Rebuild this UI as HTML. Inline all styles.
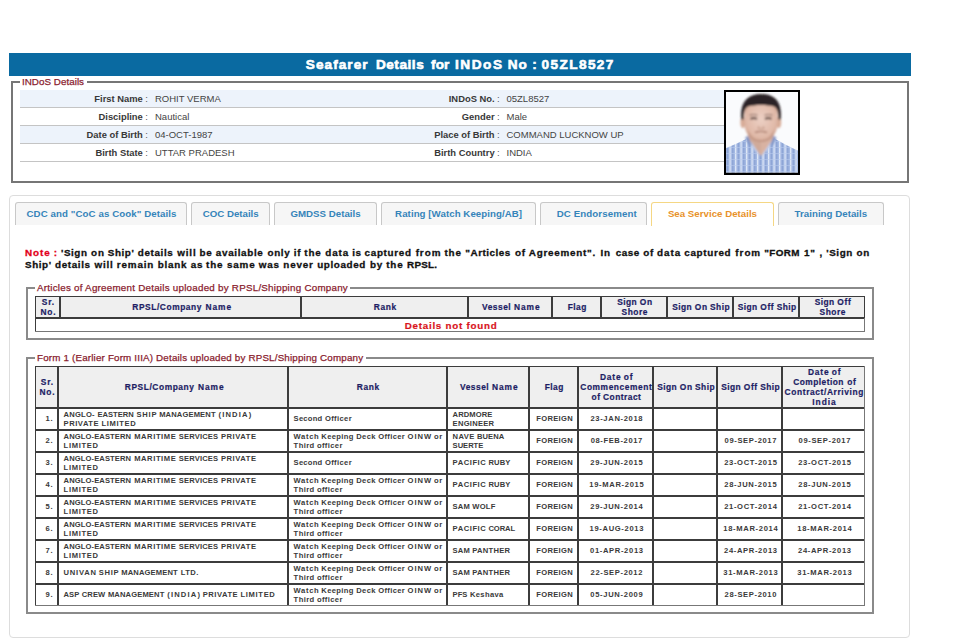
<!DOCTYPE html>
<html><head><meta charset="utf-8"><style>
html,body{margin:0;padding:0;background:#fff;width:970px;height:640px;overflow:hidden;position:relative}
.t{position:absolute;white-space:nowrap;font-family:"Liberation Sans",sans-serif}
.b{position:absolute}
</style></head><body>
<div class="b" style="left:9px;top:53px;width:902px;height:23px;background:#0a6aa1;"></div>
<div class="t" style="top:56.19px;font-size:13.6px;line-height:17px;font-weight:bold;color:#fff;letter-spacing:1.054px;left:305.8px;-webkit-text-stroke:0.6px #fff;">Seafarer</div>
<div class="t" style="top:56.19px;font-size:13.6px;line-height:17px;font-weight:bold;color:#fff;letter-spacing:0.537px;left:375.9px;-webkit-text-stroke:0.6px #fff;">Details</div>
<div class="t" style="top:56.19px;font-size:13.6px;line-height:17px;font-weight:bold;color:#fff;letter-spacing:0.037px;left:431.1px;-webkit-text-stroke:0.6px #fff;">for</div>
<div class="t" style="top:56.19px;font-size:13.6px;line-height:17px;font-weight:bold;color:#fff;letter-spacing:1.555px;left:455px;-webkit-text-stroke:0.6px #fff;">INDoS</div>
<div class="t" style="top:56.19px;font-size:13.6px;line-height:17px;font-weight:bold;color:#fff;letter-spacing:0.800px;left:507.8px;-webkit-text-stroke:0.6px #fff;">No</div>
<div class="t" style="top:56.19px;font-size:13.6px;line-height:17px;font-weight:bold;color:#fff;left:532.3px;-webkit-text-stroke:0.6px #fff;">:</div>
<div class="t" style="top:56.19px;font-size:13.6px;line-height:17px;font-weight:bold;color:#fff;letter-spacing:1.404px;left:541.6px;-webkit-text-stroke:0.6px #fff;">05ZL8527</div>
<div class="b" style="left:11px;top:81px;width:898px;height:102px;border:2px solid #767676;box-sizing:border-box;"></div>
<div class="b" style="left:19.5px;top:76px;width:67px;height:10px;background:#fff;"></div>
<div class="t" style="top:75.60px;font-size:9.8px;line-height:12px;color:#8a1c2e;letter-spacing:0.039px;left:22px;-webkit-text-stroke:0.25px #8a1c2e;">INDoS Details</div>
<div class="b" style="left:20px;top:90px;width:704px;height:17px;background:#edf3fb;"></div>
<div class="b" style="left:20px;top:107px;width:704px;height:1px;background:#c4c4c4;"></div>
<div class="t" style="top:92.74px;font-size:9.4px;line-height:12px;font-weight:bold;color:#383838;right:827.20px;">First Name</div>
<div class="t" style="top:92.71px;font-size:9.5px;line-height:12px;color:#555;left:145.3px;">:</div>
<div class="t" style="top:92.71px;font-size:9.5px;line-height:12px;color:#444;left:155px;">ROHIT VERMA</div>
<div class="t" style="top:92.74px;font-size:9.4px;line-height:12px;font-weight:bold;color:#383838;right:475.40px;">INDoS No.</div>
<div class="t" style="top:92.71px;font-size:9.5px;line-height:12px;color:#555;left:496.9px;">:</div>
<div class="t" style="top:92.71px;font-size:9.5px;line-height:12px;color:#444;left:506.5px;">05ZL8527</div>
<div class="b" style="left:20px;top:108px;width:704px;height:17px;background:#fff;"></div>
<div class="b" style="left:20px;top:125px;width:704px;height:1px;background:#c4c4c4;"></div>
<div class="t" style="top:110.74px;font-size:9.4px;line-height:12px;font-weight:bold;color:#383838;right:827.20px;">Discipline</div>
<div class="t" style="top:110.71px;font-size:9.5px;line-height:12px;color:#555;left:145.3px;">:</div>
<div class="t" style="top:110.71px;font-size:9.5px;line-height:12px;color:#444;left:155px;">Nautical</div>
<div class="t" style="top:110.74px;font-size:9.4px;line-height:12px;font-weight:bold;color:#383838;right:475.40px;">Gender</div>
<div class="t" style="top:110.71px;font-size:9.5px;line-height:12px;color:#555;left:496.9px;">:</div>
<div class="t" style="top:110.71px;font-size:9.5px;line-height:12px;color:#444;left:506.5px;">Male</div>
<div class="b" style="left:20px;top:126px;width:704px;height:17px;background:#edf3fb;"></div>
<div class="b" style="left:20px;top:143px;width:704px;height:1px;background:#c4c4c4;"></div>
<div class="t" style="top:128.74px;font-size:9.4px;line-height:12px;font-weight:bold;color:#383838;right:827.20px;">Date of Birth</div>
<div class="t" style="top:128.71px;font-size:9.5px;line-height:12px;color:#555;left:145.3px;">:</div>
<div class="t" style="top:128.71px;font-size:9.5px;line-height:12px;color:#444;left:155px;">04-OCT-1987</div>
<div class="t" style="top:128.74px;font-size:9.4px;line-height:12px;font-weight:bold;color:#383838;right:475.40px;">Place of Birth</div>
<div class="t" style="top:128.71px;font-size:9.5px;line-height:12px;color:#555;left:496.9px;">:</div>
<div class="t" style="top:128.71px;font-size:9.5px;line-height:12px;color:#444;left:506.5px;">COMMAND LUCKNOW UP</div>
<div class="b" style="left:20px;top:144px;width:704px;height:17px;background:#fff;"></div>
<div class="b" style="left:20px;top:161px;width:704px;height:1px;background:#c4c4c4;"></div>
<div class="t" style="top:146.74px;font-size:9.4px;line-height:12px;font-weight:bold;color:#383838;right:827.20px;">Birth State</div>
<div class="t" style="top:146.71px;font-size:9.5px;line-height:12px;color:#555;left:145.3px;">:</div>
<div class="t" style="top:146.71px;font-size:9.5px;line-height:12px;color:#444;left:155px;">UTTAR PRADESH</div>
<div class="t" style="top:146.74px;font-size:9.4px;line-height:12px;font-weight:bold;color:#383838;right:475.40px;">Birth Country</div>
<div class="t" style="top:146.71px;font-size:9.5px;line-height:12px;color:#555;left:496.9px;">:</div>
<div class="t" style="top:146.71px;font-size:9.5px;line-height:12px;color:#444;left:506.5px;">INDIA</div>
<svg class="b" style="left:724px;top:90px" width="76" height="85" viewBox="0 0 76 85">
<defs>
<filter id="bl" x="-20%" y="-20%" width="140%" height="140%"><feGaussianBlur stdDeviation="0.9"/></filter>
<filter id="bl2" x="-20%" y="-20%" width="140%" height="140%"><feGaussianBlur stdDeviation="0.5"/></filter>
<pattern id="pl" width="5.5" height="6" patternUnits="userSpaceOnUse">
<rect width="5.5" height="6" fill="#a4b9e3"/>
<rect x="0" width="1.3" height="6" fill="#dfe8f7"/>
<rect x="3" width="0.9" height="6" fill="#7f97cc"/>
<rect y="3" width="5.5" height="0.7" fill="#b9caec" opacity="0.8"/>
</pattern>
<radialGradient id="skin" cx="50%" cy="45%" r="60%"><stop offset="0" stop-color="#ecd0c4"/><stop offset="0.75" stop-color="#e0b9a8"/><stop offset="1" stop-color="#cfa08c"/></radialGradient>
</defs>
<rect x="0" y="0" width="76" height="85" fill="#000"/>
<rect x="2" y="2" width="72" height="80.5" fill="#fafbfd"/>
<svg x="2" y="2" width="72" height="80.5" viewBox="2 2 72 80.5" overflow="hidden">
<g filter="url(#bl2)">
<path d="M1 58.5 C9 55 17 52 23 48.5 L50.5 48.5 C57 52.5 66 57 75 61 L75 84 L1 84 Z" fill="url(#pl)"/>
</g>
<g filter="url(#bl)">
<path d="M24 42 L49.5 42 L50 50 L37 66 L23.5 50 Z" fill="#d9b2a2"/>
<path d="M37 52 C33 52 27 49 24 46 L24 50 L36.5 65.5 Z" fill="#c9a594" opacity="0.6"/>
<path d="M22.5 48 L30 60 L36.5 66 L28 53 Z" fill="#c2d0ee"/>
<path d="M51 48 L44 60 L37.5 66 L46 53 Z" fill="#c2d0ee"/>
<path d="M21 47.5 L24 46 L28 56 L25 55 Z" fill="#7f94c6"/>
<path d="M52.5 47.5 L49.5 46 L46 56 L49 55 Z" fill="#7f94c6"/>
<ellipse cx="18.8" cy="32.5" rx="2.4" ry="5.8" fill="#d7ab97"/>
<ellipse cx="54.8" cy="32.5" rx="2.4" ry="5.8" fill="#d7ab97"/>
<path d="M20.5 22 C20.5 13 28 11 37 11 C46.5 11 53.5 13 53.5 23 L53.5 35 C53 44 45.5 51.5 37 51.5 C28.5 51.5 21 44 20.5 35 Z" fill="url(#skin)"/>
<path d="M26.5 29 C28.5 27.8 31 27.8 33 29 M41 29 C43 27.8 45.5 27.8 47.5 29" stroke="#4e3832" stroke-width="1.8" fill="none"/>
<path d="M25.5 25.3 C28 24.3 31 24.3 33.5 25.3 M40.5 25.3 C43 24.3 46 24.3 48.5 25.3" stroke="#6a4e46" stroke-width="1.1" opacity="0.8" fill="none"/>
<path d="M35 36 L34 38.5 L40 38.5 L39 36" stroke="#c29684" stroke-width="1" fill="none"/>
<path d="M31 42.3 C34 41.3 40 41.3 43 42.3" stroke="#a57565" stroke-width="1.4" fill="none"/>
<path d="M24 40 C27 47 31 50 37 50 C43 50 47 47 50 40 L50 44 C47 50 43 52 37 52 C31 52 27 50 24 44 Z" fill="#b48876" opacity="0.55"/>
<path d="M17.5 30 C15 12 24 4 37 4 C50 4 59 11 56.5 30 L54.2 29 C54.5 22 53 18 50 16.5 C43 14.5 31 14.5 24 16.5 C21 18 19.7 22 19.8 29 Z" fill="#2b2425"/>
</g>
</svg>
</svg>
<div class="b" style="left:9px;top:195px;width:901px;height:443px;border:1px solid #dddddd;border-radius:4px;box-sizing:border-box;"></div>
<div class="b" style="left:15px;top:202px;width:172px;height:23px;border:1px solid #c8c8c8;border-bottom:none;border-radius:3px 3px 0 0;background:#f6f6f6;box-sizing:border-box;"></div>
<div class="t" style="top:207.94px;font-size:9.7px;line-height:12px;font-weight:bold;color:#3584ba;letter-spacing:0.088px;left:26.5px;">CDC and &quot;CoC as Cook&quot; Details</div>
<div class="b" style="left:191px;top:202px;width:79px;height:23px;border:1px solid #c8c8c8;border-bottom:none;border-radius:3px 3px 0 0;background:#f6f6f6;box-sizing:border-box;"></div>
<div class="t" style="top:207.94px;font-size:9.7px;line-height:12px;font-weight:bold;color:#3584ba;left:202.7px;">COC Details</div>
<div class="b" style="left:274px;top:202px;width:103px;height:23px;border:1px solid #c8c8c8;border-bottom:none;border-radius:3px 3px 0 0;background:#f6f6f6;box-sizing:border-box;"></div>
<div class="t" style="top:207.94px;font-size:9.7px;line-height:12px;font-weight:bold;color:#3584ba;letter-spacing:0.018px;left:290.4px;">GMDSS Details</div>
<div class="b" style="left:381px;top:202px;width:155px;height:23px;border:1px solid #c8c8c8;border-bottom:none;border-radius:3px 3px 0 0;background:#f6f6f6;box-sizing:border-box;"></div>
<div class="t" style="top:207.94px;font-size:9.7px;line-height:12px;font-weight:bold;color:#3584ba;letter-spacing:0.059px;left:395.1px;">Rating [Watch Keeping/AB]</div>
<div class="b" style="left:540px;top:202px;width:107px;height:23px;border:1px solid #c8c8c8;border-bottom:none;border-radius:3px 3px 0 0;background:#f6f6f6;box-sizing:border-box;"></div>
<div class="t" style="top:207.94px;font-size:9.7px;line-height:12px;font-weight:bold;color:#3584ba;letter-spacing:0.108px;left:556.7px;">DC Endorsement</div>
<div class="b" style="left:651px;top:202px;width:123px;height:24px;border:1px solid #f5d784;border-bottom:none;border-radius:3px 3px 0 0;background:#fff;box-sizing:border-box;"></div>
<div class="t" style="top:207.94px;font-size:9.7px;line-height:12px;font-weight:bold;color:#e8922a;letter-spacing:0.012px;left:667.9px;">Sea Service Details</div>
<div class="b" style="left:778px;top:202px;width:106px;height:23px;border:1px solid #c8c8c8;border-bottom:none;border-radius:3px 3px 0 0;background:#f6f6f6;box-sizing:border-box;"></div>
<div class="t" style="top:207.94px;font-size:9.7px;line-height:12px;font-weight:bold;color:#3584ba;letter-spacing:0.031px;left:794.6px;">Training Details</div>
<div class="t" style="top:246.77px;font-size:9.9px;line-height:12px;font-weight:bold;color:#e3001b;letter-spacing:0.912px;left:25.0px;-webkit-text-stroke:0.3px #e3001b;">Note</div>
<div class="t" style="top:246.77px;font-size:9.9px;line-height:12px;font-weight:bold;color:#e3001b;left:53.73px;-webkit-text-stroke:0.3px #e3001b;">:</div>
<div class="t" style="top:246.77px;font-size:9.9px;line-height:12px;font-weight:bold;color:#111;letter-spacing:0.560px;left:61.0px;-webkit-text-stroke:0.3px #111;">&#x27;Sign</div>
<div class="t" style="top:246.77px;font-size:9.9px;line-height:12px;font-weight:bold;color:#111;letter-spacing:0.800px;left:91.08px;-webkit-text-stroke:0.3px #111;">on</div>
<div class="t" style="top:246.77px;font-size:9.9px;line-height:12px;font-weight:bold;color:#111;letter-spacing:0.560px;left:107.77px;-webkit-text-stroke:0.3px #111;">Ship&#x27;</div>
<div class="t" style="top:246.77px;font-size:9.9px;line-height:12px;font-weight:bold;color:#111;letter-spacing:0.619px;left:137.85px;-webkit-text-stroke:0.3px #111;">details</div>
<div class="t" style="top:246.77px;font-size:9.9px;line-height:12px;font-weight:bold;color:#111;letter-spacing:0.838px;left:177.22px;-webkit-text-stroke:0.3px #111;">will</div>
<div class="t" style="top:246.77px;font-size:9.9px;line-height:12px;font-weight:bold;color:#111;letter-spacing:0.800px;left:199.51px;-webkit-text-stroke:0.3px #111;">be</div>
<div class="t" style="top:246.77px;font-size:9.9px;line-height:12px;font-weight:bold;color:#111;letter-spacing:0.647px;left:215.86px;-webkit-text-stroke:0.3px #111;">available</div>
<div class="t" style="top:246.77px;font-size:9.9px;line-height:12px;font-weight:bold;color:#111;letter-spacing:0.643px;left:267.5px;-webkit-text-stroke:0.3px #111;">only</div>
<div class="t" style="top:246.77px;font-size:9.9px;line-height:12px;font-weight:bold;color:#111;letter-spacing:0.800px;left:293.71px;-webkit-text-stroke:0.3px #111;">if</div>
<div class="t" style="top:246.77px;font-size:9.9px;line-height:12px;font-weight:bold;color:#111;letter-spacing:0.800px;left:304.32px;-webkit-text-stroke:0.3px #111;">the</div>
<div class="t" style="top:246.77px;font-size:9.9px;line-height:12px;font-weight:bold;color:#111;letter-spacing:0.953px;left:325.17px;-webkit-text-stroke:0.3px #111;">data</div>
<div class="t" style="top:246.77px;font-size:9.9px;line-height:12px;font-weight:bold;color:#111;letter-spacing:0.448px;left:352.34px;-webkit-text-stroke:0.3px #111;">is</div>
<div class="t" style="top:246.77px;font-size:9.9px;line-height:12px;font-weight:bold;color:#111;letter-spacing:0.662px;left:364.58px;-webkit-text-stroke:0.3px #111;">captured</div>
<div class="t" style="top:246.77px;font-size:9.9px;line-height:12px;font-weight:bold;color:#111;letter-spacing:0.943px;left:415.65px;-webkit-text-stroke:0.3px #111;">from</div>
<div class="t" style="top:246.77px;font-size:9.9px;line-height:12px;font-weight:bold;color:#111;letter-spacing:0.800px;left:444.48px;-webkit-text-stroke:0.3px #111;">the</div>
<div class="t" style="top:246.77px;font-size:9.9px;line-height:12px;font-weight:bold;color:#111;letter-spacing:0.503px;left:465.32px;-webkit-text-stroke:0.3px #111;">&quot;Articles</div>
<div class="t" style="top:246.77px;font-size:9.9px;line-height:12px;font-weight:bold;color:#111;letter-spacing:0.800px;left:514.94px;-webkit-text-stroke:0.3px #111;">of</div>
<div class="t" style="top:246.77px;font-size:9.9px;line-height:12px;font-weight:bold;color:#111;letter-spacing:0.728px;left:528.86px;-webkit-text-stroke:0.3px #111;">Agreement&quot;.</div>
<div class="t" style="top:246.77px;font-size:9.9px;line-height:12px;font-weight:bold;color:#111;letter-spacing:0.800px;left:600.49px;-webkit-text-stroke:0.3px #111;">In</div>
<div class="t" style="top:246.77px;font-size:9.9px;line-height:12px;font-weight:bold;color:#111;letter-spacing:0.469px;left:615.83px;-webkit-text-stroke:0.3px #111;">case</div>
<div class="t" style="top:246.77px;font-size:9.9px;line-height:12px;font-weight:bold;color:#111;letter-spacing:0.800px;left:643.21px;-webkit-text-stroke:0.3px #111;">of</div>
<div class="t" style="top:246.77px;font-size:9.9px;line-height:12px;font-weight:bold;color:#111;letter-spacing:0.953px;left:657.12px;-webkit-text-stroke:0.3px #111;">data</div>
<div class="t" style="top:246.77px;font-size:9.9px;line-height:12px;font-weight:bold;color:#111;letter-spacing:0.662px;left:684.29px;-webkit-text-stroke:0.3px #111;">captured</div>
<div class="t" style="top:246.77px;font-size:9.9px;line-height:12px;font-weight:bold;color:#111;letter-spacing:0.943px;left:735.36px;-webkit-text-stroke:0.3px #111;">from</div>
<div class="t" style="top:246.77px;font-size:9.9px;line-height:12px;font-weight:bold;color:#111;letter-spacing:0.405px;left:764.19px;-webkit-text-stroke:0.3px #111;">&quot;FORM</div>
<div class="t" style="top:246.77px;font-size:9.9px;line-height:12px;font-weight:bold;color:#111;letter-spacing:0.800px;left:803.95px;-webkit-text-stroke:0.3px #111;">1&quot;</div>
<div class="t" style="top:246.77px;font-size:9.9px;line-height:12px;font-weight:bold;color:#111;left:819.55px;-webkit-text-stroke:0.3px #111;">,</div>
<div class="t" style="top:246.77px;font-size:9.9px;line-height:12px;font-weight:bold;color:#111;letter-spacing:0.560px;left:826.31px;-webkit-text-stroke:0.3px #111;">&#x27;Sign</div>
<div class="t" style="top:246.77px;font-size:9.9px;line-height:12px;font-weight:bold;color:#111;letter-spacing:0.800px;left:856.39px;-webkit-text-stroke:0.3px #111;">on</div>
<div class="t" style="top:258.77px;font-size:9.9px;line-height:12px;font-weight:bold;color:#111;letter-spacing:0.560px;left:25.0px;-webkit-text-stroke:0.3px #111;">Ship&#x27;</div>
<div class="t" style="top:258.77px;font-size:9.9px;line-height:12px;font-weight:bold;color:#111;letter-spacing:0.619px;left:55.07px;-webkit-text-stroke:0.3px #111;">details</div>
<div class="t" style="top:258.77px;font-size:9.9px;line-height:12px;font-weight:bold;color:#111;letter-spacing:0.838px;left:94.45px;-webkit-text-stroke:0.3px #111;">will</div>
<div class="t" style="top:258.77px;font-size:9.9px;line-height:12px;font-weight:bold;color:#111;letter-spacing:0.854px;left:116.74px;-webkit-text-stroke:0.3px #111;">remain</div>
<div class="t" style="top:258.77px;font-size:9.9px;line-height:12px;font-weight:bold;color:#111;letter-spacing:0.728px;left:157.81px;-webkit-text-stroke:0.3px #111;">blank</div>
<div class="t" style="top:258.77px;font-size:9.9px;line-height:12px;font-weight:bold;color:#111;letter-spacing:0.746px;left:190.69px;-webkit-text-stroke:0.3px #111;">as</div>
<div class="t" style="top:258.77px;font-size:9.9px;line-height:12px;font-weight:bold;color:#111;letter-spacing:0.800px;left:206.06px;-webkit-text-stroke:0.3px #111;">the</div>
<div class="t" style="top:258.77px;font-size:9.9px;line-height:12px;font-weight:bold;color:#111;letter-spacing:0.828px;left:226.91px;-webkit-text-stroke:0.3px #111;">same</div>
<div class="t" style="top:258.77px;font-size:9.9px;line-height:12px;font-weight:bold;color:#111;letter-spacing:0.800px;left:258.79px;-webkit-text-stroke:0.3px #111;">was</div>
<div class="t" style="top:258.77px;font-size:9.9px;line-height:12px;font-weight:bold;color:#111;letter-spacing:0.822px;left:283.34px;-webkit-text-stroke:0.3px #111;">never</div>
<div class="t" style="top:258.77px;font-size:9.9px;line-height:12px;font-weight:bold;color:#111;letter-spacing:0.600px;left:317.18px;-webkit-text-stroke:0.3px #111;">uploaded</div>
<div class="t" style="top:258.77px;font-size:9.9px;line-height:12px;font-weight:bold;color:#111;letter-spacing:0.800px;left:370.04px;-webkit-text-stroke:0.3px #111;">by</div>
<div class="t" style="top:258.77px;font-size:9.9px;line-height:12px;font-weight:bold;color:#111;letter-spacing:0.800px;left:386.26px;-webkit-text-stroke:0.3px #111;">the</div>
<div class="t" style="top:258.77px;font-size:9.9px;line-height:12px;font-weight:bold;color:#111;letter-spacing:0.227px;left:407.1px;-webkit-text-stroke:0.3px #111;">RPSL.</div>
<div class="b" style="left:26px;top:287px;width:848px;height:53px;border:2px solid #8a8a8a;box-sizing:border-box;"></div>
<div class="b" style="left:34.5px;top:281px;width:315.8px;height:10px;background:#fff;"></div>
<div class="t" style="top:282.20px;font-size:9.8px;line-height:12px;color:#8a1c2e;letter-spacing:0.243px;left:37px;-webkit-text-stroke:0.25px #8a1c2e;">Articles of Agreement Details uploaded by RPSL/Shipping Company</div>
<div class="b" style="left:26px;top:357px;width:848px;height:257px;border:2px solid #8a8a8a;box-sizing:border-box;"></div>
<div class="b" style="left:34.5px;top:351px;width:331.1px;height:10px;background:#fff;"></div>
<div class="t" style="top:352.10px;font-size:9.8px;line-height:12px;color:#8a1c2e;letter-spacing:0.178px;left:37px;-webkit-text-stroke:0.25px #8a1c2e;">Form 1 (Earlier Form IIIA) Details uploaded by RPSL/Shipping Company</div>
<div class="b" style="left:35px;top:296px;width:25px;height:22px;border:1px solid #3c3c3c;box-sizing:border-box;background:#efefef;"></div>
<div class="b" style="left:60px;top:296px;width:241px;height:22px;border:1px solid #3c3c3c;box-sizing:border-box;background:#efefef;"></div>
<div class="b" style="left:301px;top:296px;width:167px;height:22px;border:1px solid #3c3c3c;box-sizing:border-box;background:#efefef;"></div>
<div class="b" style="left:468px;top:296px;width:84px;height:22px;border:1px solid #3c3c3c;box-sizing:border-box;background:#efefef;"></div>
<div class="b" style="left:552px;top:296px;width:49px;height:22px;border:1px solid #3c3c3c;box-sizing:border-box;background:#efefef;"></div>
<div class="b" style="left:601px;top:296px;width:66px;height:22px;border:1px solid #3c3c3c;box-sizing:border-box;background:#efefef;"></div>
<div class="b" style="left:667px;top:296px;width:66px;height:22px;border:1px solid #3c3c3c;box-sizing:border-box;background:#efefef;"></div>
<div class="b" style="left:733px;top:296px;width:66px;height:22px;border:1px solid #3c3c3c;box-sizing:border-box;background:#efefef;"></div>
<div class="b" style="left:799px;top:296px;width:66px;height:22px;border:1px solid #3c3c3c;box-sizing:border-box;background:#efefef;"></div>
<div class="t" style="top:297.09px;font-size:8.4px;line-height:10px;font-weight:bold;color:#1d1d64;letter-spacing:0.800px;left:41.81px;-webkit-text-stroke:0.2px #1d1d64;">Sr.</div>
<div class="t" style="top:307.09px;font-size:8.4px;line-height:10px;font-weight:bold;color:#1d1d64;letter-spacing:0.733px;left:40.52px;-webkit-text-stroke:0.2px #1d1d64;">No.</div>
<div class="t" style="top:302.09px;font-size:8.4px;line-height:10px;font-weight:bold;color:#1d1d64;letter-spacing:0.563px;left:132.37px;-webkit-text-stroke:0.2px #1d1d64;">RPSL/Company</div>
<div class="t" style="top:302.09px;font-size:8.4px;line-height:10px;font-weight:bold;color:#1d1d64;letter-spacing:0.908px;left:205.55px;-webkit-text-stroke:0.2px #1d1d64;">Name</div>
<div class="t" style="top:302.09px;font-size:8.4px;line-height:10px;font-weight:bold;color:#1d1d64;letter-spacing:0.606px;left:373.85px;-webkit-text-stroke:0.2px #1d1d64;">Rank</div>
<div class="t" style="top:302.09px;font-size:8.4px;line-height:10px;font-weight:bold;color:#1d1d64;letter-spacing:0.493px;left:482.1px;-webkit-text-stroke:0.2px #1d1d64;">Vessel</div>
<div class="t" style="top:302.09px;font-size:8.4px;line-height:10px;font-weight:bold;color:#1d1d64;letter-spacing:0.908px;left:514.0px;-webkit-text-stroke:0.2px #1d1d64;">Name</div>
<div class="t" style="top:302.09px;font-size:8.4px;line-height:10px;font-weight:bold;color:#1d1d64;letter-spacing:0.464px;left:567.69px;-webkit-text-stroke:0.2px #1d1d64;">Flag</div>
<div class="t" style="top:297.09px;font-size:8.4px;line-height:10px;font-weight:bold;color:#1d1d64;letter-spacing:0.425px;left:617.27px;-webkit-text-stroke:0.2px #1d1d64;">Sign</div>
<div class="t" style="top:297.09px;font-size:8.4px;line-height:10px;font-weight:bold;color:#1d1d64;letter-spacing:0.682px;left:639.85px;-webkit-text-stroke:0.2px #1d1d64;">On</div>
<div class="t" style="top:307.09px;font-size:8.4px;line-height:10px;font-weight:bold;color:#1d1d64;letter-spacing:0.512px;left:621.6px;-webkit-text-stroke:0.2px #1d1d64;">Shore</div>
<div class="t" style="top:302.09px;font-size:8.4px;line-height:10px;font-weight:bold;color:#1d1d64;letter-spacing:0.425px;left:672.21px;-webkit-text-stroke:0.2px #1d1d64;">Sign</div>
<div class="t" style="top:302.09px;font-size:8.4px;line-height:10px;font-weight:bold;color:#1d1d64;letter-spacing:0.682px;left:694.79px;-webkit-text-stroke:0.2px #1d1d64;">On</div>
<div class="t" style="top:302.09px;font-size:8.4px;line-height:10px;font-weight:bold;color:#1d1d64;letter-spacing:0.425px;left:710.12px;-webkit-text-stroke:0.2px #1d1d64;">Ship</div>
<div class="t" style="top:302.09px;font-size:8.4px;line-height:10px;font-weight:bold;color:#1d1d64;letter-spacing:0.425px;left:737.69px;-webkit-text-stroke:0.2px #1d1d64;">Sign</div>
<div class="t" style="top:302.09px;font-size:8.4px;line-height:10px;font-weight:bold;color:#1d1d64;letter-spacing:0.635px;left:760.27px;-webkit-text-stroke:0.2px #1d1d64;">Off</div>
<div class="t" style="top:302.09px;font-size:8.4px;line-height:10px;font-weight:bold;color:#1d1d64;letter-spacing:0.425px;left:776.66px;-webkit-text-stroke:0.2px #1d1d64;">Ship</div>
<div class="t" style="top:297.09px;font-size:8.4px;line-height:10px;font-weight:bold;color:#1d1d64;letter-spacing:0.425px;left:814.75px;-webkit-text-stroke:0.2px #1d1d64;">Sign</div>
<div class="t" style="top:297.09px;font-size:8.4px;line-height:10px;font-weight:bold;color:#1d1d64;letter-spacing:0.635px;left:837.33px;-webkit-text-stroke:0.2px #1d1d64;">Off</div>
<div class="t" style="top:307.09px;font-size:8.4px;line-height:10px;font-weight:bold;color:#1d1d64;letter-spacing:0.512px;left:819.6px;-webkit-text-stroke:0.2px #1d1d64;">Shore</div>
<div class="b" style="left:35px;top:318px;width:830px;height:14px;border:1px solid #3c3c3c;box-sizing:border-box;background:#fff;"></div>
<div class="t" style="top:319.70px;font-size:9.8px;line-height:12px;font-weight:bold;color:#d9141c;letter-spacing:0.750px;left:36.08px;width:830px;text-align:center;-webkit-text-stroke:0.2px #d9141c;">Details not found</div>
<div class="b" style="left:35px;top:366px;width:23px;height:42px;border:1px solid #3c3c3c;box-sizing:border-box;background:#efefef;"></div>
<div class="b" style="left:58px;top:366px;width:230px;height:42px;border:1px solid #3c3c3c;box-sizing:border-box;background:#efefef;"></div>
<div class="b" style="left:288px;top:366px;width:159px;height:42px;border:1px solid #3c3c3c;box-sizing:border-box;background:#efefef;"></div>
<div class="b" style="left:447px;top:366px;width:82px;height:42px;border:1px solid #3c3c3c;box-sizing:border-box;background:#efefef;"></div>
<div class="b" style="left:529px;top:366px;width:49px;height:42px;border:1px solid #3c3c3c;box-sizing:border-box;background:#efefef;"></div>
<div class="b" style="left:578px;top:366px;width:75px;height:42px;border:1px solid #3c3c3c;box-sizing:border-box;background:#efefef;"></div>
<div class="b" style="left:653px;top:366px;width:64px;height:42px;border:1px solid #3c3c3c;box-sizing:border-box;background:#efefef;"></div>
<div class="b" style="left:717px;top:366px;width:65px;height:42px;border:1px solid #3c3c3c;box-sizing:border-box;background:#efefef;"></div>
<div class="b" style="left:782px;top:366px;width:83px;height:42px;border:1px solid #3c3c3c;box-sizing:border-box;background:#efefef;"></div>
<div class="t" style="top:377.09px;font-size:8.4px;line-height:10px;font-weight:bold;color:#1d1d64;letter-spacing:0.800px;left:40.81px;-webkit-text-stroke:0.2px #1d1d64;">Sr.</div>
<div class="t" style="top:387.09px;font-size:8.4px;line-height:10px;font-weight:bold;color:#1d1d64;letter-spacing:0.733px;left:39.52px;-webkit-text-stroke:0.2px #1d1d64;">No.</div>
<div class="t" style="top:382.09px;font-size:8.4px;line-height:10px;font-weight:bold;color:#1d1d64;letter-spacing:0.563px;left:124.87px;-webkit-text-stroke:0.2px #1d1d64;">RPSL/Company</div>
<div class="t" style="top:382.09px;font-size:8.4px;line-height:10px;font-weight:bold;color:#1d1d64;letter-spacing:0.908px;left:198.05px;-webkit-text-stroke:0.2px #1d1d64;">Name</div>
<div class="t" style="top:382.09px;font-size:8.4px;line-height:10px;font-weight:bold;color:#1d1d64;letter-spacing:0.606px;left:356.85px;-webkit-text-stroke:0.2px #1d1d64;">Rank</div>
<div class="t" style="top:382.09px;font-size:8.4px;line-height:10px;font-weight:bold;color:#1d1d64;letter-spacing:0.493px;left:460.1px;-webkit-text-stroke:0.2px #1d1d64;">Vessel</div>
<div class="t" style="top:382.09px;font-size:8.4px;line-height:10px;font-weight:bold;color:#1d1d64;letter-spacing:0.908px;left:492.0px;-webkit-text-stroke:0.2px #1d1d64;">Name</div>
<div class="t" style="top:382.09px;font-size:8.4px;line-height:10px;font-weight:bold;color:#1d1d64;letter-spacing:0.464px;left:544.69px;-webkit-text-stroke:0.2px #1d1d64;">Flag</div>
<div class="t" style="top:372.09px;font-size:8.4px;line-height:10px;font-weight:bold;color:#1d1d64;letter-spacing:0.832px;left:599.95px;-webkit-text-stroke:0.2px #1d1d64;">Date</div>
<div class="t" style="top:372.09px;font-size:8.4px;line-height:10px;font-weight:bold;color:#1d1d64;letter-spacing:0.800px;left:623.78px;-webkit-text-stroke:0.2px #1d1d64;">of</div>
<div class="t" style="top:382.09px;font-size:8.4px;line-height:10px;font-weight:bold;color:#1d1d64;letter-spacing:0.564px;left:580.32px;-webkit-text-stroke:0.2px #1d1d64;">Commencement</div>
<div class="t" style="top:392.09px;font-size:8.4px;line-height:10px;font-weight:bold;color:#1d1d64;letter-spacing:0.800px;left:591.39px;-webkit-text-stroke:0.2px #1d1d64;">of</div>
<div class="t" style="top:392.09px;font-size:8.4px;line-height:10px;font-weight:bold;color:#1d1d64;letter-spacing:0.476px;left:603.07px;-webkit-text-stroke:0.2px #1d1d64;">Contract</div>
<div class="t" style="top:382.09px;font-size:8.4px;line-height:10px;font-weight:bold;color:#1d1d64;letter-spacing:0.425px;left:657.21px;-webkit-text-stroke:0.2px #1d1d64;">Sign</div>
<div class="t" style="top:382.09px;font-size:8.4px;line-height:10px;font-weight:bold;color:#1d1d64;letter-spacing:0.682px;left:679.79px;-webkit-text-stroke:0.2px #1d1d64;">On</div>
<div class="t" style="top:382.09px;font-size:8.4px;line-height:10px;font-weight:bold;color:#1d1d64;letter-spacing:0.425px;left:695.12px;-webkit-text-stroke:0.2px #1d1d64;">Ship</div>
<div class="t" style="top:382.09px;font-size:8.4px;line-height:10px;font-weight:bold;color:#1d1d64;letter-spacing:0.425px;left:721.19px;-webkit-text-stroke:0.2px #1d1d64;">Sign</div>
<div class="t" style="top:382.09px;font-size:8.4px;line-height:10px;font-weight:bold;color:#1d1d64;letter-spacing:0.635px;left:743.77px;-webkit-text-stroke:0.2px #1d1d64;">Off</div>
<div class="t" style="top:382.09px;font-size:8.4px;line-height:10px;font-weight:bold;color:#1d1d64;letter-spacing:0.425px;left:760.16px;-webkit-text-stroke:0.2px #1d1d64;">Ship</div>
<div class="t" style="top:367.09px;font-size:8.4px;line-height:10px;font-weight:bold;color:#1d1d64;letter-spacing:0.832px;left:807.95px;-webkit-text-stroke:0.2px #1d1d64;">Date</div>
<div class="t" style="top:367.09px;font-size:8.4px;line-height:10px;font-weight:bold;color:#1d1d64;letter-spacing:0.800px;left:831.78px;-webkit-text-stroke:0.2px #1d1d64;">of</div>
<div class="t" style="top:377.09px;font-size:8.4px;line-height:10px;font-weight:bold;color:#1d1d64;letter-spacing:0.466px;left:793.15px;-webkit-text-stroke:0.2px #1d1d64;">Completion</div>
<div class="t" style="top:377.09px;font-size:8.4px;line-height:10px;font-weight:bold;color:#1d1d64;letter-spacing:0.800px;left:847.19px;-webkit-text-stroke:0.2px #1d1d64;">of</div>
<div class="t" style="top:387.09px;font-size:8.4px;line-height:10px;font-weight:bold;color:#1d1d64;letter-spacing:0.622px;left:784.59px;-webkit-text-stroke:0.2px #1d1d64;">Contract/Arriving</div>
<div class="t" style="top:397.09px;font-size:8.4px;line-height:10px;font-weight:bold;color:#1d1d64;letter-spacing:0.965px;left:812.3px;-webkit-text-stroke:0.2px #1d1d64;">India</div>
<div class="b" style="left:35px;top:408px;width:23px;height:22px;border:1px solid #3c3c3c;box-sizing:border-box;background:#fff;"></div>
<div class="b" style="left:58px;top:408px;width:230px;height:22px;border:1px solid #3c3c3c;box-sizing:border-box;background:#fff;"></div>
<div class="b" style="left:288px;top:408px;width:159px;height:22px;border:1px solid #3c3c3c;box-sizing:border-box;background:#fff;"></div>
<div class="b" style="left:447px;top:408px;width:82px;height:22px;border:1px solid #3c3c3c;box-sizing:border-box;background:#fff;"></div>
<div class="b" style="left:529px;top:408px;width:49px;height:22px;border:1px solid #3c3c3c;box-sizing:border-box;background:#fff;"></div>
<div class="b" style="left:578px;top:408px;width:75px;height:22px;border:1px solid #3c3c3c;box-sizing:border-box;background:#fff;"></div>
<div class="b" style="left:653px;top:408px;width:64px;height:22px;border:1px solid #3c3c3c;box-sizing:border-box;background:#fff;"></div>
<div class="b" style="left:717px;top:408px;width:65px;height:22px;border:1px solid #3c3c3c;box-sizing:border-box;background:#fff;"></div>
<div class="b" style="left:782px;top:408px;width:83px;height:22px;border:1px solid #3c3c3c;box-sizing:border-box;background:#fff;"></div>
<div class="t" style="top:413.57px;font-size:7.6px;line-height:10px;font-weight:bold;color:#3a3a3a;letter-spacing:0.800px;right:916.70px;">1.</div>
<div class="t" style="top:409.87px;font-size:7.6px;line-height:10px;font-weight:bold;color:#3a3a3a;letter-spacing:0.215px;left:63.6px;">ANGLO-</div>
<div class="t" style="top:409.87px;font-size:7.6px;line-height:10px;font-weight:bold;color:#3a3a3a;letter-spacing:0.016px;left:97.38px;">EASTERN</div>
<div class="t" style="top:409.87px;font-size:7.6px;line-height:10px;font-weight:bold;color:#3a3a3a;letter-spacing:0.729px;left:136.57px;">SHIP</div>
<div class="t" style="top:409.87px;font-size:7.6px;line-height:10px;font-weight:bold;color:#3a3a3a;letter-spacing:0.127px;left:159.13px;">MANAGEMENT</div>
<div class="t" style="top:409.87px;font-size:7.6px;line-height:10px;font-weight:bold;color:#3a3a3a;letter-spacing:1.151px;left:218.54px;">(INDIA)</div>
<div class="t" style="top:418.87px;font-size:7.6px;line-height:10px;font-weight:bold;color:#3a3a3a;letter-spacing:0.535px;left:63.6px;">PRIVATE</div>
<div class="t" style="top:418.87px;font-size:7.6px;line-height:10px;font-weight:bold;color:#3a3a3a;letter-spacing:0.661px;left:101.39px;">LIMITED</div>
<div class="t" style="top:413.57px;font-size:7.6px;line-height:10px;font-weight:bold;color:#3a3a3a;letter-spacing:0.236px;left:293.6px;">Second</div>
<div class="t" style="top:413.57px;font-size:7.6px;line-height:10px;font-weight:bold;color:#3a3a3a;letter-spacing:0.366px;left:324.94px;">Officer</div>
<div class="t" style="top:409.87px;font-size:7.6px;line-height:10px;font-weight:bold;color:#3a3a3a;letter-spacing:0.100px;left:452.6px;">ARDMORE</div>
<div class="t" style="top:418.87px;font-size:7.6px;line-height:10px;font-weight:bold;color:#3a3a3a;letter-spacing:0.257px;left:452.6px;">ENGINEER</div>
<div class="t" style="top:413.57px;font-size:7.6px;line-height:10px;font-weight:bold;color:#3a3a3a;letter-spacing:0.305px;left:536.28px;">FOREIGN</div>
<div class="t" style="top:413.57px;font-size:7.6px;line-height:10px;font-weight:bold;color:#3a3a3a;letter-spacing:0.660px;left:590.41px;">23-JAN-2018</div>
<div class="b" style="left:35px;top:430px;width:23px;height:22px;border:1px solid #3c3c3c;box-sizing:border-box;background:#fff;"></div>
<div class="b" style="left:58px;top:430px;width:230px;height:22px;border:1px solid #3c3c3c;box-sizing:border-box;background:#fff;"></div>
<div class="b" style="left:288px;top:430px;width:159px;height:22px;border:1px solid #3c3c3c;box-sizing:border-box;background:#fff;"></div>
<div class="b" style="left:447px;top:430px;width:82px;height:22px;border:1px solid #3c3c3c;box-sizing:border-box;background:#fff;"></div>
<div class="b" style="left:529px;top:430px;width:49px;height:22px;border:1px solid #3c3c3c;box-sizing:border-box;background:#fff;"></div>
<div class="b" style="left:578px;top:430px;width:75px;height:22px;border:1px solid #3c3c3c;box-sizing:border-box;background:#fff;"></div>
<div class="b" style="left:653px;top:430px;width:64px;height:22px;border:1px solid #3c3c3c;box-sizing:border-box;background:#fff;"></div>
<div class="b" style="left:717px;top:430px;width:65px;height:22px;border:1px solid #3c3c3c;box-sizing:border-box;background:#fff;"></div>
<div class="b" style="left:782px;top:430px;width:83px;height:22px;border:1px solid #3c3c3c;box-sizing:border-box;background:#fff;"></div>
<div class="t" style="top:435.57px;font-size:7.6px;line-height:10px;font-weight:bold;color:#3a3a3a;letter-spacing:0.800px;right:916.70px;">2.</div>
<div class="t" style="top:431.87px;font-size:7.6px;line-height:10px;font-weight:bold;color:#3a3a3a;letter-spacing:0.099px;left:63.6px;">ANGLO-EASTERN</div>
<div class="t" style="top:431.87px;font-size:7.6px;line-height:10px;font-weight:bold;color:#3a3a3a;letter-spacing:0.588px;left:134.14px;">MARITIME</div>
<div class="t" style="top:431.87px;font-size:7.6px;line-height:10px;font-weight:bold;color:#3a3a3a;letter-spacing:0.175px;left:178.66px;">SERVICES</div>
<div class="t" style="top:431.87px;font-size:7.6px;line-height:10px;font-weight:bold;color:#3a3a3a;letter-spacing:0.535px;left:220.98px;">PRIVATE</div>
<div class="t" style="top:440.87px;font-size:7.6px;line-height:10px;font-weight:bold;color:#3a3a3a;letter-spacing:0.661px;left:63.6px;">LIMITED</div>
<div class="t" style="top:431.87px;font-size:7.6px;line-height:10px;font-weight:bold;color:#3a3a3a;letter-spacing:0.634px;left:293.6px;">Watch</div>
<div class="t" style="top:431.87px;font-size:7.6px;line-height:10px;font-weight:bold;color:#3a3a3a;letter-spacing:0.352px;left:321.33px;">Keeping</div>
<div class="t" style="top:431.87px;font-size:7.6px;line-height:10px;font-weight:bold;color:#3a3a3a;letter-spacing:0.402px;left:356.16px;">Deck</div>
<div class="t" style="top:431.87px;font-size:7.6px;line-height:10px;font-weight:bold;color:#3a3a3a;letter-spacing:0.366px;left:378.16px;">Officer</div>
<div class="t" style="top:431.87px;font-size:7.6px;line-height:10px;font-weight:bold;color:#3a3a3a;letter-spacing:1.030px;left:407.54px;">OINW</div>
<div class="t" style="top:431.87px;font-size:7.6px;line-height:10px;font-weight:bold;color:#3a3a3a;letter-spacing:0.752px;left:433.98px;">or</div>
<div class="t" style="top:440.87px;font-size:7.6px;line-height:10px;font-weight:bold;color:#3a3a3a;letter-spacing:0.421px;left:293.6px;">Third</div>
<div class="t" style="top:440.87px;font-size:7.6px;line-height:10px;font-weight:bold;color:#3a3a3a;letter-spacing:0.385px;left:316.91px;">officer</div>
<div class="t" style="top:431.87px;font-size:7.6px;line-height:10px;font-weight:bold;color:#3a3a3a;letter-spacing:0.364px;left:452.6px;">NAVE</div>
<div class="t" style="top:431.87px;font-size:7.6px;line-height:10px;font-weight:bold;color:#3a3a3a;letter-spacing:0.083px;left:476.89px;">BUENA</div>
<div class="t" style="top:440.87px;font-size:7.6px;line-height:10px;font-weight:bold;color:#3a3a3a;letter-spacing:-0.027px;left:452.6px;">SUERTE</div>
<div class="t" style="top:435.57px;font-size:7.6px;line-height:10px;font-weight:bold;color:#3a3a3a;letter-spacing:0.305px;left:536.28px;">FOREIGN</div>
<div class="t" style="top:435.57px;font-size:7.6px;line-height:10px;font-weight:bold;color:#3a3a3a;letter-spacing:0.601px;left:590.7px;">08-FEB-2017</div>
<div class="t" style="top:435.57px;font-size:7.6px;line-height:10px;font-weight:bold;color:#3a3a3a;letter-spacing:0.623px;left:724.59px;">09-SEP-2017</div>
<div class="t" style="top:435.57px;font-size:7.6px;line-height:10px;font-weight:bold;color:#3a3a3a;letter-spacing:0.623px;left:798.59px;">09-SEP-2017</div>
<div class="b" style="left:35px;top:452px;width:23px;height:22px;border:1px solid #3c3c3c;box-sizing:border-box;background:#fff;"></div>
<div class="b" style="left:58px;top:452px;width:230px;height:22px;border:1px solid #3c3c3c;box-sizing:border-box;background:#fff;"></div>
<div class="b" style="left:288px;top:452px;width:159px;height:22px;border:1px solid #3c3c3c;box-sizing:border-box;background:#fff;"></div>
<div class="b" style="left:447px;top:452px;width:82px;height:22px;border:1px solid #3c3c3c;box-sizing:border-box;background:#fff;"></div>
<div class="b" style="left:529px;top:452px;width:49px;height:22px;border:1px solid #3c3c3c;box-sizing:border-box;background:#fff;"></div>
<div class="b" style="left:578px;top:452px;width:75px;height:22px;border:1px solid #3c3c3c;box-sizing:border-box;background:#fff;"></div>
<div class="b" style="left:653px;top:452px;width:64px;height:22px;border:1px solid #3c3c3c;box-sizing:border-box;background:#fff;"></div>
<div class="b" style="left:717px;top:452px;width:65px;height:22px;border:1px solid #3c3c3c;box-sizing:border-box;background:#fff;"></div>
<div class="b" style="left:782px;top:452px;width:83px;height:22px;border:1px solid #3c3c3c;box-sizing:border-box;background:#fff;"></div>
<div class="t" style="top:457.57px;font-size:7.6px;line-height:10px;font-weight:bold;color:#3a3a3a;letter-spacing:0.800px;right:916.70px;">3.</div>
<div class="t" style="top:453.87px;font-size:7.6px;line-height:10px;font-weight:bold;color:#3a3a3a;letter-spacing:0.099px;left:63.6px;">ANGLO-EASTERN</div>
<div class="t" style="top:453.87px;font-size:7.6px;line-height:10px;font-weight:bold;color:#3a3a3a;letter-spacing:0.588px;left:134.14px;">MARITIME</div>
<div class="t" style="top:453.87px;font-size:7.6px;line-height:10px;font-weight:bold;color:#3a3a3a;letter-spacing:0.175px;left:178.66px;">SERVICES</div>
<div class="t" style="top:453.87px;font-size:7.6px;line-height:10px;font-weight:bold;color:#3a3a3a;letter-spacing:0.535px;left:220.98px;">PRIVATE</div>
<div class="t" style="top:462.87px;font-size:7.6px;line-height:10px;font-weight:bold;color:#3a3a3a;letter-spacing:0.661px;left:63.6px;">LIMITED</div>
<div class="t" style="top:457.57px;font-size:7.6px;line-height:10px;font-weight:bold;color:#3a3a3a;letter-spacing:0.236px;left:293.6px;">Second</div>
<div class="t" style="top:457.57px;font-size:7.6px;line-height:10px;font-weight:bold;color:#3a3a3a;letter-spacing:0.366px;left:324.94px;">Officer</div>
<div class="t" style="top:457.57px;font-size:7.6px;line-height:10px;font-weight:bold;color:#3a3a3a;letter-spacing:0.552px;left:452.6px;">PACIFIC</div>
<div class="t" style="top:457.57px;font-size:7.6px;line-height:10px;font-weight:bold;color:#3a3a3a;letter-spacing:0.090px;left:488.49px;">RUBY</div>
<div class="t" style="top:457.57px;font-size:7.6px;line-height:10px;font-weight:bold;color:#3a3a3a;letter-spacing:0.305px;left:536.28px;">FOREIGN</div>
<div class="t" style="top:457.57px;font-size:7.6px;line-height:10px;font-weight:bold;color:#3a3a3a;letter-spacing:0.685px;left:590.28px;">29-JUN-2015</div>
<div class="t" style="top:457.57px;font-size:7.6px;line-height:10px;font-weight:bold;color:#3a3a3a;letter-spacing:0.672px;left:724.13px;">23-OCT-2015</div>
<div class="t" style="top:457.57px;font-size:7.6px;line-height:10px;font-weight:bold;color:#3a3a3a;letter-spacing:0.672px;left:798.13px;">23-OCT-2015</div>
<div class="b" style="left:35px;top:474px;width:23px;height:22px;border:1px solid #3c3c3c;box-sizing:border-box;background:#fff;"></div>
<div class="b" style="left:58px;top:474px;width:230px;height:22px;border:1px solid #3c3c3c;box-sizing:border-box;background:#fff;"></div>
<div class="b" style="left:288px;top:474px;width:159px;height:22px;border:1px solid #3c3c3c;box-sizing:border-box;background:#fff;"></div>
<div class="b" style="left:447px;top:474px;width:82px;height:22px;border:1px solid #3c3c3c;box-sizing:border-box;background:#fff;"></div>
<div class="b" style="left:529px;top:474px;width:49px;height:22px;border:1px solid #3c3c3c;box-sizing:border-box;background:#fff;"></div>
<div class="b" style="left:578px;top:474px;width:75px;height:22px;border:1px solid #3c3c3c;box-sizing:border-box;background:#fff;"></div>
<div class="b" style="left:653px;top:474px;width:64px;height:22px;border:1px solid #3c3c3c;box-sizing:border-box;background:#fff;"></div>
<div class="b" style="left:717px;top:474px;width:65px;height:22px;border:1px solid #3c3c3c;box-sizing:border-box;background:#fff;"></div>
<div class="b" style="left:782px;top:474px;width:83px;height:22px;border:1px solid #3c3c3c;box-sizing:border-box;background:#fff;"></div>
<div class="t" style="top:479.57px;font-size:7.6px;line-height:10px;font-weight:bold;color:#3a3a3a;letter-spacing:0.800px;right:916.70px;">4.</div>
<div class="t" style="top:475.87px;font-size:7.6px;line-height:10px;font-weight:bold;color:#3a3a3a;letter-spacing:0.099px;left:63.6px;">ANGLO-EASTERN</div>
<div class="t" style="top:475.87px;font-size:7.6px;line-height:10px;font-weight:bold;color:#3a3a3a;letter-spacing:0.588px;left:134.14px;">MARITIME</div>
<div class="t" style="top:475.87px;font-size:7.6px;line-height:10px;font-weight:bold;color:#3a3a3a;letter-spacing:0.175px;left:178.66px;">SERVICES</div>
<div class="t" style="top:475.87px;font-size:7.6px;line-height:10px;font-weight:bold;color:#3a3a3a;letter-spacing:0.535px;left:220.98px;">PRIVATE</div>
<div class="t" style="top:484.87px;font-size:7.6px;line-height:10px;font-weight:bold;color:#3a3a3a;letter-spacing:0.661px;left:63.6px;">LIMITED</div>
<div class="t" style="top:475.87px;font-size:7.6px;line-height:10px;font-weight:bold;color:#3a3a3a;letter-spacing:0.634px;left:293.6px;">Watch</div>
<div class="t" style="top:475.87px;font-size:7.6px;line-height:10px;font-weight:bold;color:#3a3a3a;letter-spacing:0.352px;left:321.33px;">Keeping</div>
<div class="t" style="top:475.87px;font-size:7.6px;line-height:10px;font-weight:bold;color:#3a3a3a;letter-spacing:0.402px;left:356.16px;">Deck</div>
<div class="t" style="top:475.87px;font-size:7.6px;line-height:10px;font-weight:bold;color:#3a3a3a;letter-spacing:0.366px;left:378.16px;">Officer</div>
<div class="t" style="top:475.87px;font-size:7.6px;line-height:10px;font-weight:bold;color:#3a3a3a;letter-spacing:1.030px;left:407.54px;">OINW</div>
<div class="t" style="top:475.87px;font-size:7.6px;line-height:10px;font-weight:bold;color:#3a3a3a;letter-spacing:0.752px;left:433.98px;">or</div>
<div class="t" style="top:484.87px;font-size:7.6px;line-height:10px;font-weight:bold;color:#3a3a3a;letter-spacing:0.421px;left:293.6px;">Third</div>
<div class="t" style="top:484.87px;font-size:7.6px;line-height:10px;font-weight:bold;color:#3a3a3a;letter-spacing:0.385px;left:316.91px;">officer</div>
<div class="t" style="top:479.57px;font-size:7.6px;line-height:10px;font-weight:bold;color:#3a3a3a;letter-spacing:0.552px;left:452.6px;">PACIFIC</div>
<div class="t" style="top:479.57px;font-size:7.6px;line-height:10px;font-weight:bold;color:#3a3a3a;letter-spacing:0.090px;left:488.49px;">RUBY</div>
<div class="t" style="top:479.57px;font-size:7.6px;line-height:10px;font-weight:bold;color:#3a3a3a;letter-spacing:0.305px;left:536.28px;">FOREIGN</div>
<div class="t" style="top:479.57px;font-size:7.6px;line-height:10px;font-weight:bold;color:#3a3a3a;letter-spacing:0.680px;left:589.25px;">19-MAR-2015</div>
<div class="t" style="top:479.57px;font-size:7.6px;line-height:10px;font-weight:bold;color:#3a3a3a;letter-spacing:0.685px;left:724.28px;">28-JUN-2015</div>
<div class="t" style="top:479.57px;font-size:7.6px;line-height:10px;font-weight:bold;color:#3a3a3a;letter-spacing:0.685px;left:798.28px;">28-JUN-2015</div>
<div class="b" style="left:35px;top:496px;width:23px;height:22px;border:1px solid #3c3c3c;box-sizing:border-box;background:#fff;"></div>
<div class="b" style="left:58px;top:496px;width:230px;height:22px;border:1px solid #3c3c3c;box-sizing:border-box;background:#fff;"></div>
<div class="b" style="left:288px;top:496px;width:159px;height:22px;border:1px solid #3c3c3c;box-sizing:border-box;background:#fff;"></div>
<div class="b" style="left:447px;top:496px;width:82px;height:22px;border:1px solid #3c3c3c;box-sizing:border-box;background:#fff;"></div>
<div class="b" style="left:529px;top:496px;width:49px;height:22px;border:1px solid #3c3c3c;box-sizing:border-box;background:#fff;"></div>
<div class="b" style="left:578px;top:496px;width:75px;height:22px;border:1px solid #3c3c3c;box-sizing:border-box;background:#fff;"></div>
<div class="b" style="left:653px;top:496px;width:64px;height:22px;border:1px solid #3c3c3c;box-sizing:border-box;background:#fff;"></div>
<div class="b" style="left:717px;top:496px;width:65px;height:22px;border:1px solid #3c3c3c;box-sizing:border-box;background:#fff;"></div>
<div class="b" style="left:782px;top:496px;width:83px;height:22px;border:1px solid #3c3c3c;box-sizing:border-box;background:#fff;"></div>
<div class="t" style="top:501.57px;font-size:7.6px;line-height:10px;font-weight:bold;color:#3a3a3a;letter-spacing:0.800px;right:916.70px;">5.</div>
<div class="t" style="top:497.87px;font-size:7.6px;line-height:10px;font-weight:bold;color:#3a3a3a;letter-spacing:0.099px;left:63.6px;">ANGLO-EASTERN</div>
<div class="t" style="top:497.87px;font-size:7.6px;line-height:10px;font-weight:bold;color:#3a3a3a;letter-spacing:0.588px;left:134.14px;">MARITIME</div>
<div class="t" style="top:497.87px;font-size:7.6px;line-height:10px;font-weight:bold;color:#3a3a3a;letter-spacing:0.175px;left:178.66px;">SERVICES</div>
<div class="t" style="top:497.87px;font-size:7.6px;line-height:10px;font-weight:bold;color:#3a3a3a;letter-spacing:0.535px;left:220.98px;">PRIVATE</div>
<div class="t" style="top:506.87px;font-size:7.6px;line-height:10px;font-weight:bold;color:#3a3a3a;letter-spacing:0.661px;left:63.6px;">LIMITED</div>
<div class="t" style="top:497.87px;font-size:7.6px;line-height:10px;font-weight:bold;color:#3a3a3a;letter-spacing:0.634px;left:293.6px;">Watch</div>
<div class="t" style="top:497.87px;font-size:7.6px;line-height:10px;font-weight:bold;color:#3a3a3a;letter-spacing:0.352px;left:321.33px;">Keeping</div>
<div class="t" style="top:497.87px;font-size:7.6px;line-height:10px;font-weight:bold;color:#3a3a3a;letter-spacing:0.402px;left:356.16px;">Deck</div>
<div class="t" style="top:497.87px;font-size:7.6px;line-height:10px;font-weight:bold;color:#3a3a3a;letter-spacing:0.366px;left:378.16px;">Officer</div>
<div class="t" style="top:497.87px;font-size:7.6px;line-height:10px;font-weight:bold;color:#3a3a3a;letter-spacing:1.030px;left:407.54px;">OINW</div>
<div class="t" style="top:497.87px;font-size:7.6px;line-height:10px;font-weight:bold;color:#3a3a3a;letter-spacing:0.752px;left:433.98px;">or</div>
<div class="t" style="top:506.87px;font-size:7.6px;line-height:10px;font-weight:bold;color:#3a3a3a;letter-spacing:0.421px;left:293.6px;">Third</div>
<div class="t" style="top:506.87px;font-size:7.6px;line-height:10px;font-weight:bold;color:#3a3a3a;letter-spacing:0.385px;left:316.91px;">officer</div>
<div class="t" style="top:501.57px;font-size:7.6px;line-height:10px;font-weight:bold;color:#3a3a3a;letter-spacing:0.141px;left:452.6px;">SAM</div>
<div class="t" style="top:501.57px;font-size:7.6px;line-height:10px;font-weight:bold;color:#3a3a3a;letter-spacing:0.218px;left:472.37px;">WOLF</div>
<div class="t" style="top:501.57px;font-size:7.6px;line-height:10px;font-weight:bold;color:#3a3a3a;letter-spacing:0.305px;left:536.28px;">FOREIGN</div>
<div class="t" style="top:501.57px;font-size:7.6px;line-height:10px;font-weight:bold;color:#3a3a3a;letter-spacing:0.685px;left:590.28px;">29-JUN-2014</div>
<div class="t" style="top:501.57px;font-size:7.6px;line-height:10px;font-weight:bold;color:#3a3a3a;letter-spacing:0.672px;left:724.13px;">21-OCT-2014</div>
<div class="t" style="top:501.57px;font-size:7.6px;line-height:10px;font-weight:bold;color:#3a3a3a;letter-spacing:0.672px;left:798.13px;">21-OCT-2014</div>
<div class="b" style="left:35px;top:518px;width:23px;height:22px;border:1px solid #3c3c3c;box-sizing:border-box;background:#fff;"></div>
<div class="b" style="left:58px;top:518px;width:230px;height:22px;border:1px solid #3c3c3c;box-sizing:border-box;background:#fff;"></div>
<div class="b" style="left:288px;top:518px;width:159px;height:22px;border:1px solid #3c3c3c;box-sizing:border-box;background:#fff;"></div>
<div class="b" style="left:447px;top:518px;width:82px;height:22px;border:1px solid #3c3c3c;box-sizing:border-box;background:#fff;"></div>
<div class="b" style="left:529px;top:518px;width:49px;height:22px;border:1px solid #3c3c3c;box-sizing:border-box;background:#fff;"></div>
<div class="b" style="left:578px;top:518px;width:75px;height:22px;border:1px solid #3c3c3c;box-sizing:border-box;background:#fff;"></div>
<div class="b" style="left:653px;top:518px;width:64px;height:22px;border:1px solid #3c3c3c;box-sizing:border-box;background:#fff;"></div>
<div class="b" style="left:717px;top:518px;width:65px;height:22px;border:1px solid #3c3c3c;box-sizing:border-box;background:#fff;"></div>
<div class="b" style="left:782px;top:518px;width:83px;height:22px;border:1px solid #3c3c3c;box-sizing:border-box;background:#fff;"></div>
<div class="t" style="top:523.57px;font-size:7.6px;line-height:10px;font-weight:bold;color:#3a3a3a;letter-spacing:0.800px;right:916.70px;">6.</div>
<div class="t" style="top:519.87px;font-size:7.6px;line-height:10px;font-weight:bold;color:#3a3a3a;letter-spacing:0.099px;left:63.6px;">ANGLO-EASTERN</div>
<div class="t" style="top:519.87px;font-size:7.6px;line-height:10px;font-weight:bold;color:#3a3a3a;letter-spacing:0.588px;left:134.14px;">MARITIME</div>
<div class="t" style="top:519.87px;font-size:7.6px;line-height:10px;font-weight:bold;color:#3a3a3a;letter-spacing:0.175px;left:178.66px;">SERVICES</div>
<div class="t" style="top:519.87px;font-size:7.6px;line-height:10px;font-weight:bold;color:#3a3a3a;letter-spacing:0.535px;left:220.98px;">PRIVATE</div>
<div class="t" style="top:528.87px;font-size:7.6px;line-height:10px;font-weight:bold;color:#3a3a3a;letter-spacing:0.661px;left:63.6px;">LIMITED</div>
<div class="t" style="top:519.87px;font-size:7.6px;line-height:10px;font-weight:bold;color:#3a3a3a;letter-spacing:0.634px;left:293.6px;">Watch</div>
<div class="t" style="top:519.87px;font-size:7.6px;line-height:10px;font-weight:bold;color:#3a3a3a;letter-spacing:0.352px;left:321.33px;">Keeping</div>
<div class="t" style="top:519.87px;font-size:7.6px;line-height:10px;font-weight:bold;color:#3a3a3a;letter-spacing:0.402px;left:356.16px;">Deck</div>
<div class="t" style="top:519.87px;font-size:7.6px;line-height:10px;font-weight:bold;color:#3a3a3a;letter-spacing:0.366px;left:378.16px;">Officer</div>
<div class="t" style="top:519.87px;font-size:7.6px;line-height:10px;font-weight:bold;color:#3a3a3a;letter-spacing:1.030px;left:407.54px;">OINW</div>
<div class="t" style="top:519.87px;font-size:7.6px;line-height:10px;font-weight:bold;color:#3a3a3a;letter-spacing:0.752px;left:433.98px;">or</div>
<div class="t" style="top:528.87px;font-size:7.6px;line-height:10px;font-weight:bold;color:#3a3a3a;letter-spacing:0.421px;left:293.6px;">Third</div>
<div class="t" style="top:528.87px;font-size:7.6px;line-height:10px;font-weight:bold;color:#3a3a3a;letter-spacing:0.385px;left:316.91px;">officer</div>
<div class="t" style="top:523.57px;font-size:7.6px;line-height:10px;font-weight:bold;color:#3a3a3a;letter-spacing:0.552px;left:452.6px;">PACIFIC</div>
<div class="t" style="top:523.57px;font-size:7.6px;line-height:10px;font-weight:bold;color:#3a3a3a;letter-spacing:-0.108px;left:488.49px;">CORAL</div>
<div class="t" style="top:523.57px;font-size:7.6px;line-height:10px;font-weight:bold;color:#3a3a3a;letter-spacing:0.305px;left:536.28px;">FOREIGN</div>
<div class="t" style="top:523.57px;font-size:7.6px;line-height:10px;font-weight:bold;color:#3a3a3a;letter-spacing:0.647px;left:589.62px;">19-AUG-2013</div>
<div class="t" style="top:523.57px;font-size:7.6px;line-height:10px;font-weight:bold;color:#3a3a3a;letter-spacing:0.680px;left:723.25px;">18-MAR-2014</div>
<div class="t" style="top:523.57px;font-size:7.6px;line-height:10px;font-weight:bold;color:#3a3a3a;letter-spacing:0.680px;left:797.25px;">18-MAR-2014</div>
<div class="b" style="left:35px;top:540px;width:23px;height:22px;border:1px solid #3c3c3c;box-sizing:border-box;background:#fff;"></div>
<div class="b" style="left:58px;top:540px;width:230px;height:22px;border:1px solid #3c3c3c;box-sizing:border-box;background:#fff;"></div>
<div class="b" style="left:288px;top:540px;width:159px;height:22px;border:1px solid #3c3c3c;box-sizing:border-box;background:#fff;"></div>
<div class="b" style="left:447px;top:540px;width:82px;height:22px;border:1px solid #3c3c3c;box-sizing:border-box;background:#fff;"></div>
<div class="b" style="left:529px;top:540px;width:49px;height:22px;border:1px solid #3c3c3c;box-sizing:border-box;background:#fff;"></div>
<div class="b" style="left:578px;top:540px;width:75px;height:22px;border:1px solid #3c3c3c;box-sizing:border-box;background:#fff;"></div>
<div class="b" style="left:653px;top:540px;width:64px;height:22px;border:1px solid #3c3c3c;box-sizing:border-box;background:#fff;"></div>
<div class="b" style="left:717px;top:540px;width:65px;height:22px;border:1px solid #3c3c3c;box-sizing:border-box;background:#fff;"></div>
<div class="b" style="left:782px;top:540px;width:83px;height:22px;border:1px solid #3c3c3c;box-sizing:border-box;background:#fff;"></div>
<div class="t" style="top:545.57px;font-size:7.6px;line-height:10px;font-weight:bold;color:#3a3a3a;letter-spacing:0.800px;right:916.70px;">7.</div>
<div class="t" style="top:541.87px;font-size:7.6px;line-height:10px;font-weight:bold;color:#3a3a3a;letter-spacing:0.099px;left:63.6px;">ANGLO-EASTERN</div>
<div class="t" style="top:541.87px;font-size:7.6px;line-height:10px;font-weight:bold;color:#3a3a3a;letter-spacing:0.588px;left:134.14px;">MARITIME</div>
<div class="t" style="top:541.87px;font-size:7.6px;line-height:10px;font-weight:bold;color:#3a3a3a;letter-spacing:0.175px;left:178.66px;">SERVICES</div>
<div class="t" style="top:541.87px;font-size:7.6px;line-height:10px;font-weight:bold;color:#3a3a3a;letter-spacing:0.535px;left:220.98px;">PRIVATE</div>
<div class="t" style="top:550.87px;font-size:7.6px;line-height:10px;font-weight:bold;color:#3a3a3a;letter-spacing:0.661px;left:63.6px;">LIMITED</div>
<div class="t" style="top:541.87px;font-size:7.6px;line-height:10px;font-weight:bold;color:#3a3a3a;letter-spacing:0.634px;left:293.6px;">Watch</div>
<div class="t" style="top:541.87px;font-size:7.6px;line-height:10px;font-weight:bold;color:#3a3a3a;letter-spacing:0.352px;left:321.33px;">Keeping</div>
<div class="t" style="top:541.87px;font-size:7.6px;line-height:10px;font-weight:bold;color:#3a3a3a;letter-spacing:0.402px;left:356.16px;">Deck</div>
<div class="t" style="top:541.87px;font-size:7.6px;line-height:10px;font-weight:bold;color:#3a3a3a;letter-spacing:0.366px;left:378.16px;">Officer</div>
<div class="t" style="top:541.87px;font-size:7.6px;line-height:10px;font-weight:bold;color:#3a3a3a;letter-spacing:1.030px;left:407.54px;">OINW</div>
<div class="t" style="top:541.87px;font-size:7.6px;line-height:10px;font-weight:bold;color:#3a3a3a;letter-spacing:0.752px;left:433.98px;">or</div>
<div class="t" style="top:550.87px;font-size:7.6px;line-height:10px;font-weight:bold;color:#3a3a3a;letter-spacing:0.421px;left:293.6px;">Third</div>
<div class="t" style="top:550.87px;font-size:7.6px;line-height:10px;font-weight:bold;color:#3a3a3a;letter-spacing:0.385px;left:316.91px;">officer</div>
<div class="t" style="top:545.57px;font-size:7.6px;line-height:10px;font-weight:bold;color:#3a3a3a;letter-spacing:0.141px;left:452.6px;">SAM</div>
<div class="t" style="top:545.57px;font-size:7.6px;line-height:10px;font-weight:bold;color:#3a3a3a;letter-spacing:0.250px;left:472.37px;">PANTHER</div>
<div class="t" style="top:545.57px;font-size:7.6px;line-height:10px;font-weight:bold;color:#3a3a3a;letter-spacing:0.305px;left:536.28px;">FOREIGN</div>
<div class="t" style="top:545.57px;font-size:7.6px;line-height:10px;font-weight:bold;color:#3a3a3a;letter-spacing:0.655px;left:590.01px;">01-APR-2013</div>
<div class="t" style="top:545.57px;font-size:7.6px;line-height:10px;font-weight:bold;color:#3a3a3a;letter-spacing:0.655px;left:724.01px;">24-APR-2013</div>
<div class="t" style="top:545.57px;font-size:7.6px;line-height:10px;font-weight:bold;color:#3a3a3a;letter-spacing:0.655px;left:798.01px;">24-APR-2013</div>
<div class="b" style="left:35px;top:562px;width:23px;height:22px;border:1px solid #3c3c3c;box-sizing:border-box;background:#fff;"></div>
<div class="b" style="left:58px;top:562px;width:230px;height:22px;border:1px solid #3c3c3c;box-sizing:border-box;background:#fff;"></div>
<div class="b" style="left:288px;top:562px;width:159px;height:22px;border:1px solid #3c3c3c;box-sizing:border-box;background:#fff;"></div>
<div class="b" style="left:447px;top:562px;width:82px;height:22px;border:1px solid #3c3c3c;box-sizing:border-box;background:#fff;"></div>
<div class="b" style="left:529px;top:562px;width:49px;height:22px;border:1px solid #3c3c3c;box-sizing:border-box;background:#fff;"></div>
<div class="b" style="left:578px;top:562px;width:75px;height:22px;border:1px solid #3c3c3c;box-sizing:border-box;background:#fff;"></div>
<div class="b" style="left:653px;top:562px;width:64px;height:22px;border:1px solid #3c3c3c;box-sizing:border-box;background:#fff;"></div>
<div class="b" style="left:717px;top:562px;width:65px;height:22px;border:1px solid #3c3c3c;box-sizing:border-box;background:#fff;"></div>
<div class="b" style="left:782px;top:562px;width:83px;height:22px;border:1px solid #3c3c3c;box-sizing:border-box;background:#fff;"></div>
<div class="t" style="top:567.57px;font-size:7.6px;line-height:10px;font-weight:bold;color:#3a3a3a;letter-spacing:0.800px;right:916.70px;">8.</div>
<div class="t" style="top:567.57px;font-size:7.6px;line-height:10px;font-weight:bold;color:#3a3a3a;letter-spacing:0.764px;left:63.6px;">UNIVAN</div>
<div class="t" style="top:567.57px;font-size:7.6px;line-height:10px;font-weight:bold;color:#3a3a3a;letter-spacing:0.729px;left:98.73px;">SHIP</div>
<div class="t" style="top:567.57px;font-size:7.6px;line-height:10px;font-weight:bold;color:#3a3a3a;letter-spacing:0.127px;left:121.29px;">MANAGEMENT</div>
<div class="t" style="top:567.57px;font-size:7.6px;line-height:10px;font-weight:bold;color:#3a3a3a;letter-spacing:0.465px;left:180.7px;">LTD.</div>
<div class="t" style="top:563.87px;font-size:7.6px;line-height:10px;font-weight:bold;color:#3a3a3a;letter-spacing:0.634px;left:293.6px;">Watch</div>
<div class="t" style="top:563.87px;font-size:7.6px;line-height:10px;font-weight:bold;color:#3a3a3a;letter-spacing:0.352px;left:321.33px;">Keeping</div>
<div class="t" style="top:563.87px;font-size:7.6px;line-height:10px;font-weight:bold;color:#3a3a3a;letter-spacing:0.402px;left:356.16px;">Deck</div>
<div class="t" style="top:563.87px;font-size:7.6px;line-height:10px;font-weight:bold;color:#3a3a3a;letter-spacing:0.366px;left:378.16px;">Officer</div>
<div class="t" style="top:563.87px;font-size:7.6px;line-height:10px;font-weight:bold;color:#3a3a3a;letter-spacing:1.030px;left:407.54px;">OINW</div>
<div class="t" style="top:563.87px;font-size:7.6px;line-height:10px;font-weight:bold;color:#3a3a3a;letter-spacing:0.752px;left:433.98px;">or</div>
<div class="t" style="top:572.87px;font-size:7.6px;line-height:10px;font-weight:bold;color:#3a3a3a;letter-spacing:0.421px;left:293.6px;">Third</div>
<div class="t" style="top:572.87px;font-size:7.6px;line-height:10px;font-weight:bold;color:#3a3a3a;letter-spacing:0.385px;left:316.91px;">officer</div>
<div class="t" style="top:567.57px;font-size:7.6px;line-height:10px;font-weight:bold;color:#3a3a3a;letter-spacing:0.141px;left:452.6px;">SAM</div>
<div class="t" style="top:567.57px;font-size:7.6px;line-height:10px;font-weight:bold;color:#3a3a3a;letter-spacing:0.250px;left:472.37px;">PANTHER</div>
<div class="t" style="top:567.57px;font-size:7.6px;line-height:10px;font-weight:bold;color:#3a3a3a;letter-spacing:0.305px;left:536.28px;">FOREIGN</div>
<div class="t" style="top:567.57px;font-size:7.6px;line-height:10px;font-weight:bold;color:#3a3a3a;letter-spacing:0.623px;left:590.59px;">22-SEP-2012</div>
<div class="t" style="top:567.57px;font-size:7.6px;line-height:10px;font-weight:bold;color:#3a3a3a;letter-spacing:0.680px;left:723.25px;">31-MAR-2013</div>
<div class="t" style="top:567.57px;font-size:7.6px;line-height:10px;font-weight:bold;color:#3a3a3a;letter-spacing:0.680px;left:797.25px;">31-MAR-2013</div>
<div class="b" style="left:35px;top:584px;width:23px;height:22px;border:1px solid #3c3c3c;box-sizing:border-box;background:#fff;"></div>
<div class="b" style="left:58px;top:584px;width:230px;height:22px;border:1px solid #3c3c3c;box-sizing:border-box;background:#fff;"></div>
<div class="b" style="left:288px;top:584px;width:159px;height:22px;border:1px solid #3c3c3c;box-sizing:border-box;background:#fff;"></div>
<div class="b" style="left:447px;top:584px;width:82px;height:22px;border:1px solid #3c3c3c;box-sizing:border-box;background:#fff;"></div>
<div class="b" style="left:529px;top:584px;width:49px;height:22px;border:1px solid #3c3c3c;box-sizing:border-box;background:#fff;"></div>
<div class="b" style="left:578px;top:584px;width:75px;height:22px;border:1px solid #3c3c3c;box-sizing:border-box;background:#fff;"></div>
<div class="b" style="left:653px;top:584px;width:64px;height:22px;border:1px solid #3c3c3c;box-sizing:border-box;background:#fff;"></div>
<div class="b" style="left:717px;top:584px;width:65px;height:22px;border:1px solid #3c3c3c;box-sizing:border-box;background:#fff;"></div>
<div class="b" style="left:782px;top:584px;width:83px;height:22px;border:1px solid #3c3c3c;box-sizing:border-box;background:#fff;"></div>
<div class="t" style="top:589.57px;font-size:7.6px;line-height:10px;font-weight:bold;color:#3a3a3a;letter-spacing:0.800px;right:916.70px;">9.</div>
<div class="t" style="top:589.57px;font-size:7.6px;line-height:10px;font-weight:bold;color:#3a3a3a;letter-spacing:0.008px;left:63.6px;">ASP</div>
<div class="t" style="top:589.57px;font-size:7.6px;line-height:10px;font-weight:bold;color:#3a3a3a;letter-spacing:0.059px;left:81.83px;">CREW</div>
<div class="t" style="top:589.57px;font-size:7.6px;line-height:10px;font-weight:bold;color:#3a3a3a;letter-spacing:0.127px;left:107.89px;">MANAGEMENT</div>
<div class="t" style="top:589.57px;font-size:7.6px;line-height:10px;font-weight:bold;color:#3a3a3a;letter-spacing:1.151px;left:167.3px;">(INDIA)</div>
<div class="t" style="top:589.57px;font-size:7.6px;line-height:10px;font-weight:bold;color:#3a3a3a;letter-spacing:0.535px;left:202.7px;">PRIVATE</div>
<div class="t" style="top:589.57px;font-size:7.6px;line-height:10px;font-weight:bold;color:#3a3a3a;letter-spacing:0.661px;left:240.5px;">LIMITED</div>
<div class="t" style="top:585.87px;font-size:7.6px;line-height:10px;font-weight:bold;color:#3a3a3a;letter-spacing:0.634px;left:293.6px;">Watch</div>
<div class="t" style="top:585.87px;font-size:7.6px;line-height:10px;font-weight:bold;color:#3a3a3a;letter-spacing:0.352px;left:321.33px;">Keeping</div>
<div class="t" style="top:585.87px;font-size:7.6px;line-height:10px;font-weight:bold;color:#3a3a3a;letter-spacing:0.402px;left:356.16px;">Deck</div>
<div class="t" style="top:585.87px;font-size:7.6px;line-height:10px;font-weight:bold;color:#3a3a3a;letter-spacing:0.366px;left:378.16px;">Officer</div>
<div class="t" style="top:585.87px;font-size:7.6px;line-height:10px;font-weight:bold;color:#3a3a3a;letter-spacing:1.030px;left:407.54px;">OINW</div>
<div class="t" style="top:585.87px;font-size:7.6px;line-height:10px;font-weight:bold;color:#3a3a3a;letter-spacing:0.752px;left:433.98px;">or</div>
<div class="t" style="top:594.87px;font-size:7.6px;line-height:10px;font-weight:bold;color:#3a3a3a;letter-spacing:0.421px;left:293.6px;">Third</div>
<div class="t" style="top:594.87px;font-size:7.6px;line-height:10px;font-weight:bold;color:#3a3a3a;letter-spacing:0.385px;left:316.91px;">officer</div>
<div class="t" style="top:589.57px;font-size:7.6px;line-height:10px;font-weight:bold;color:#3a3a3a;letter-spacing:-0.014px;left:452.6px;">PFS</div>
<div class="t" style="top:589.57px;font-size:7.6px;line-height:10px;font-weight:bold;color:#3a3a3a;letter-spacing:0.344px;left:469.94px;">Keshava</div>
<div class="t" style="top:589.57px;font-size:7.6px;line-height:10px;font-weight:bold;color:#3a3a3a;letter-spacing:0.305px;left:536.28px;">FOREIGN</div>
<div class="t" style="top:589.57px;font-size:7.6px;line-height:10px;font-weight:bold;color:#3a3a3a;letter-spacing:0.685px;left:590.28px;">05-JUN-2009</div>
<div class="t" style="top:589.57px;font-size:7.6px;line-height:10px;font-weight:bold;color:#3a3a3a;letter-spacing:0.623px;left:724.59px;">28-SEP-2010</div>
<div class="b" style="left:864px;top:366px;width:1px;height:240px;background:#777;"></div>
<div class="b" style="left:35px;top:605px;width:830px;height:1px;background:#777;"></div>
<div class="b" style="left:864px;top:318px;width:1px;height:14px;background:#777;"></div>
<div class="b" style="left:35px;top:331px;width:830px;height:1px;background:#777;"></div>
</body></html>
